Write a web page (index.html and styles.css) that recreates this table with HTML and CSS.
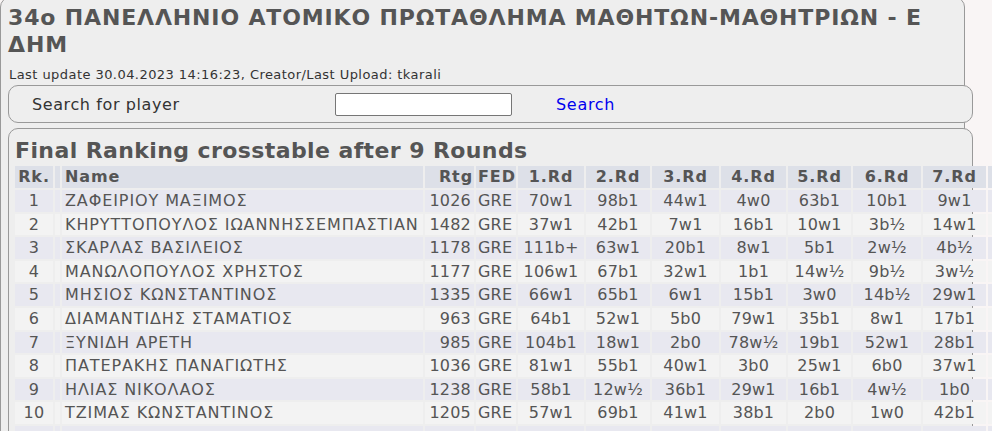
FILE: index.html
```html
<!DOCTYPE html>
<html lang="el">
<head>
<meta charset="utf-8">
<title>34o Πανελλήνιο Ατομικό Πρωτάθλημα</title>
<link rel="stylesheet" href="styles.css">
</head>
<body>
<div class="page">
  <h1 class="title">34o ΠΑΝΕΛΛΗΝΙΟ ΑΤΟΜΙΚΟ ΠΡΩΤΑΘΛΗΜΑ ΜΑΘΗΤΩΝ-ΜΑΘΗΤΡΙΩΝ - Ε ΔΗΜ</h1>
  <p class="update">Last update 30.04.2023 14:16:23, Creator/Last Upload: tkarali</p>
  <div class="searchbox">
    <span class="search-label">Search for player</span>
    <input class="search-input" type="text">
    <a class="search-link" href="#">Search</a>
  </div>
  <div class="rankbox">
    <h2 class="rank-title">Final Ranking crosstable after 9 Rounds</h2>
    <table class="cross">
      <thead>
        <tr class="hdr">
          <th class="c-rk">Rk.</th><th class="c-ti"></th><th class="c-name">Name</th><th class="c-rtg">Rtg</th><th class="c-fed">FED</th>
          <th class="c-r1">1.Rd</th><th class="c-r2">2.Rd</th><th class="c-r3">3.Rd</th><th class="c-r4">4.Rd</th><th class="c-r5">5.Rd</th><th class="c-r6">6.Rd</th><th class="c-r7">7.Rd</th><th class="c-r8"></th>
        </tr>
      </thead>
      <tbody>
        <tr class="odd"><td class="c-rk">1</td><td></td><td class="c-name">ΖΑΦΕΙΡΙΟΥ ΜΑΞΙΜΟΣ</td><td class="c-rtg">1026</td><td class="c-fed">GRE</td><td>70w1</td><td>98b1</td><td>44w1</td><td>4w0</td><td>63b1</td><td>10b1</td><td>9w1</td><td></td></tr>
        <tr class="even"><td class="c-rk">2</td><td></td><td class="c-name">ΚΗΡΥΤΤΟΠΟΥΛΟΣ ΙΩΑΝΝΗΣΣΕΜΠΑΣΤΙΑΝ</td><td class="c-rtg">1482</td><td class="c-fed">GRE</td><td>37w1</td><td>42b1</td><td>7w1</td><td>16b1</td><td>10w1</td><td>3b½</td><td>14w1</td><td></td></tr>
        <tr class="odd"><td class="c-rk">3</td><td></td><td class="c-name">ΣΚΑΡΛΑΣ ΒΑΣΙΛΕΙΟΣ</td><td class="c-rtg">1178</td><td class="c-fed">GRE</td><td>111b+</td><td>63w1</td><td>20b1</td><td>8w1</td><td>5b1</td><td>2w½</td><td>4b½</td><td></td></tr>
        <tr class="even"><td class="c-rk">4</td><td></td><td class="c-name">ΜΑΝΩΛΟΠΟΥΛΟΣ ΧΡΗΣΤΟΣ</td><td class="c-rtg">1177</td><td class="c-fed">GRE</td><td>106w1</td><td>67b1</td><td>32w1</td><td>1b1</td><td>14w½</td><td>9b½</td><td>3w½</td><td></td></tr>
        <tr class="odd"><td class="c-rk">5</td><td></td><td class="c-name">ΜΗΣΙΟΣ ΚΩΝΣΤΑΝΤΙΝΟΣ</td><td class="c-rtg">1335</td><td class="c-fed">GRE</td><td>66w1</td><td>65b1</td><td>6w1</td><td>15b1</td><td>3w0</td><td>14b½</td><td>29w1</td><td></td></tr>
        <tr class="even"><td class="c-rk">6</td><td></td><td class="c-name">ΔΙΑΜΑΝΤΙΔΗΣ ΣΤΑΜΑΤΙΟΣ</td><td class="c-rtg">963</td><td class="c-fed">GRE</td><td>64b1</td><td>52w1</td><td>5b0</td><td>79w1</td><td>35b1</td><td>8w1</td><td>17b1</td><td></td></tr>
        <tr class="odd"><td class="c-rk">7</td><td></td><td class="c-name">ΞΥΝΙΔΗ ΑΡΕΤΗ</td><td class="c-rtg">985</td><td class="c-fed">GRE</td><td>104b1</td><td>18w1</td><td>2b0</td><td>78w½</td><td>19b1</td><td>52w1</td><td>28b1</td><td></td></tr>
        <tr class="even"><td class="c-rk">8</td><td></td><td class="c-name">ΠΑΤΕΡΑΚΗΣ ΠΑΝΑΓΙΩΤΗΣ</td><td class="c-rtg">1036</td><td class="c-fed">GRE</td><td>81w1</td><td>55b1</td><td>40w1</td><td>3b0</td><td>25w1</td><td>6b0</td><td>37w1</td><td></td></tr>
        <tr class="odd"><td class="c-rk">9</td><td></td><td class="c-name">ΗΛΙΑΣ ΝΙΚΟΛΑΟΣ</td><td class="c-rtg">1238</td><td class="c-fed">GRE</td><td>58b1</td><td>12w½</td><td>36b1</td><td>29w1</td><td>16b1</td><td>4w½</td><td>1b0</td><td></td></tr>
        <tr class="even"><td class="c-rk">10</td><td></td><td class="c-name">ΤΖΙΜΑΣ ΚΩΝΣΤΑΝΤΙΝΟΣ</td><td class="c-rtg">1205</td><td class="c-fed">GRE</td><td>57w1</td><td>69b1</td><td>41w1</td><td>38b1</td><td>2b0</td><td>1w0</td><td>42b1</td><td></td></tr>
        <tr class="odd"><td class="c-rk"></td><td></td><td class="c-name"></td><td class="c-rtg"></td><td class="c-fed"></td><td></td><td></td><td></td><td></td><td></td><td></td><td></td><td></td></tr>
      </tbody>
    </table>
  </div>
</div>
</body>
</html>
```

FILE: styles.css
```css
html, body {
  margin: 0;
  padding: 0;
}

body {
  background: #f9f5f5;
  font-family: "DejaVu Sans", Verdana, sans-serif;
  color: #555;
  overflow: hidden;
}

.page {
  margin-top: -3px;
  width: 965px;
  box-sizing: border-box;
  border: 1px solid #999;
  border-radius: 10px;
  background: #eeeeee;
  padding-bottom: 40px;
}

.title {
  margin: 0;
  padding: 6px 30px 0 7px;
  font-size: 22px;
  letter-spacing: 0.85px;
  line-height: 27px;
  font-weight: bold;
  color: #555;
}

.update {
  margin: 9px 0 0 8px;
  font-size: 13px;
  letter-spacing: 0.44px;
  line-height: 15px;
  color: #333;
}

.searchbox {
  margin: 3px 0 0 7px;
  width: 965px;
  height: 38px;
  box-sizing: border-box;
  border: 1px solid #999;
  border-radius: 10px;
  background: #eeeeee;
  display: flex;
  align-items: center;
  padding-left: 23px;
}

.search-label {
  width: 303px;
  font-size: 16px;
  letter-spacing: 0.6px;
  color: #333;
}

.search-input {
  width: 177px;
  height: 23px;
  box-sizing: border-box;
  margin: 0;
  border: 1px solid #767676;
  border-radius: 2px;
  background: #fff;
  padding: 0;
}

.search-link {
  margin-left: 44px;
  font-size: 16px;
  letter-spacing: 0.7px;
  color: #0000ee;
  text-decoration: none;
}

.rankbox {
  margin: 5px 0 0 7px;
  width: 965px;
  box-sizing: border-box;
  border: 1px solid #999;
  border-radius: 10px;
  background: #eeeeee;
  padding: 9px 0 0 4px;
  height: 400px;
}

.rank-title {
  margin: 0;
  padding-left: 2px;
  font-size: 22px;
  letter-spacing: 0.4px;
  line-height: 26px;
  font-weight: bold;
  color: #555;
}

.cross {
  table-layout: fixed;
  width: 1042px;
  border-collapse: separate;
  border-spacing: 2px;
  font-size: 16px;
  color: #555;
}

.cross th,
.cross td {
  box-sizing: border-box;
  padding: 0 2px;
  white-space: nowrap;
  overflow: hidden;
  text-align: center;
}

.cross th {
  height: 22px;
  line-height: 22px;
  font-weight: bold;
  letter-spacing: 0.9px;
}

.cross td {
  height: 21.6px;
  line-height: 21.6px;
  letter-spacing: 0.2px;
}

.hdr th { background: #dde0e8; }
.odd td { background: #e8e8f0; }
.even td { background: #f3f3f3; }

.cross .c-rk { width: 38px; }
.cross .c-ti { width: 5px; padding: 0; }
.cross .c-name { width: 361px; text-align: left; padding-left: 3px; letter-spacing: 0.9px; }
.cross .c-rtg { width: 49px; text-align: right; padding-right: 3px; }
.cross .c-fed { width: 40px; text-align: left; padding-left: 2px; }
.cross th.c-rtg { padding-right: 1px; }
.cross th.c-name { letter-spacing: 0.9px; }
.cross .c-r1 { width: 66px; }
.cross .c-r2 { width: 64px; }
.cross .c-r3 { width: 67px; }
.cross .c-r4 { width: 65px; }
.cross .c-r5 { width: 63px; }
.cross .c-r6 { width: 68px; }
.cross .c-r7 { width: 63px; }
.cross .c-r8 { width: 65px; }
```
